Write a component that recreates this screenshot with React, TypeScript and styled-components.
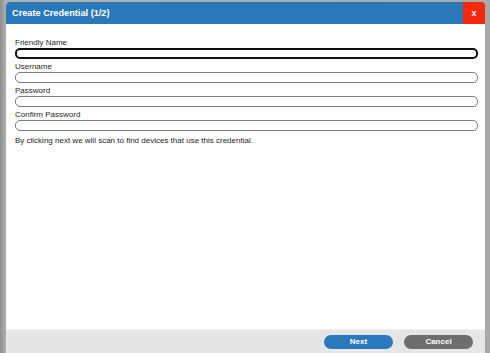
import * as React from 'react';
import styled, { createGlobalStyle } from 'styled-components';

const GlobalStyle = createGlobalStyle`
  html, body {
    margin: 0;
    padding: 0;
    background: #a3a3a3;
  }
  body {
    font-family: 'Liberation Sans', Arial, sans-serif;
  }
`;

const Page = styled.div`
  box-sizing: border-box;
  height: 353px;
  padding: 2px 5px 0 6px;
  display: flex;
  background: linear-gradient(to right, #8f8f8f 0, #b0b0b0 6px, #a9a9a9 100%);
`;

const Dialog = styled.div`
  flex: 1;
  display: flex;
  flex-direction: column;
  background: #ffffff;
  border-radius: 4px 4px 0 0;
  overflow: hidden;
`;

const TitleBar = styled.div`
  height: 22px;
  display: flex;
  align-items: center;
  background: #2b78b9;
  color: #ffffff;
  padding-left: 6px;
`;

const Title = styled.div`
  flex: 1;
  font-size: 9.2px;
  font-weight: bold;
`;

const CloseButton = styled.div`
  width: 22px;
  height: 22px;
  display: flex;
  align-items: center;
  justify-content: center;
  background: #f2290f;
  color: #ffffff;
  font-size: 9px;
  font-weight: bold;
  cursor: pointer;
`;

const Body = styled.div`
  flex: 1;
  padding: 14px 7px 0 9px;
  display: flex;
  flex-direction: column;
`;

const Field = styled.div`
  display: flex;
  flex-direction: column;
  margin-bottom: 3px;
`;

const Label = styled.label`
  font-size: 8px;
  line-height: 10px;
  color: #1e1e1e;
`;

const Input = styled.input<{ focused?: boolean }>`
  box-sizing: border-box;
  height: 11px;
  margin: 0;
  padding: 0 4px;
  border: ${p => (p.focused ? '2px solid #111' : '1px solid #7a7a7a')};
  border-radius: 5px;
  background: #ffffff;
  outline: none;
`;

const Note = styled.p`
  margin: 2px 0 0;
  font-size: 8px;
  line-height: 10px;
  color: #1e1e1e;
`;

const Footer = styled.div`
  height: 24px;
  box-sizing: border-box;
  border-top: 1px solid #f0f0f0;
  background: #e6e6e6;
  display: flex;
  align-items: center;
  justify-content: flex-end;
  gap: 11px;
  padding-right: 12px;
`;

const Button = styled.button<{ variant: 'primary' | 'secondary' }>`
  width: 69px;
  height: 14px;
  border: none;
  border-radius: 7px;
  padding: 0;
  font-family: inherit;
  font-size: 8px;
  font-weight: bold;
  color: #ffffff;
  background: ${p => (p.variant === 'primary' ? '#2b79bd' : '#6e6e6e')};
  cursor: pointer;
`;

const fields = ['Friendly Name', 'Username', 'Password', 'Confirm Password'];

export default function App() {
  return (
    <>
      <GlobalStyle />
      <Page>
        <Dialog>
          <TitleBar>
            <Title>Create Credential (1/2)</Title>
            <CloseButton>x</CloseButton>
          </TitleBar>
          <Body>
            {fields.map((f, i) => (
              <Field key={f}>
                <Label>{f}</Label>
                <Input
                  focused={i === 0}
                  type={f.includes('Password') ? 'password' : 'text'}
                />
              </Field>
            ))}
            <Note>By clicking next we will scan to find devices that use this credential.</Note>
          </Body>
          <Footer>
            <Button variant="primary">Next</Button>
            <Button variant="secondary">Cancel</Button>
          </Footer>
        </Dialog>
      </Page>
    </>
  );
}
